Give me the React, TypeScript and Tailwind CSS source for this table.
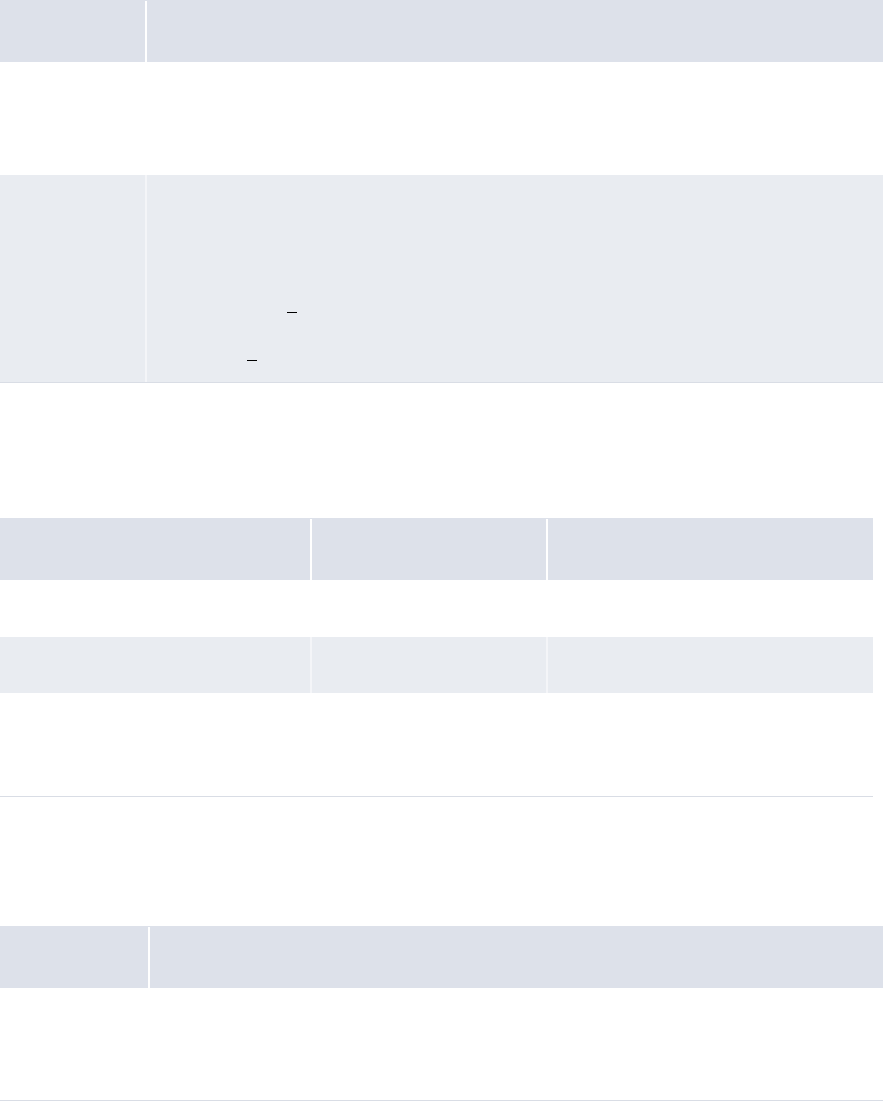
import React from 'react';

const head = 'bg-[#dde1ea]';
const stripe = 'bg-[#e9ecf1]';

const Dash = ({ left, top }: { left: number; top: number }) => (
  <div className="h-px w-[10px] bg-black" style={{ marginLeft: left, marginTop: top }} />
);

export default function App() {
  return (
    <div className="w-[883px] min-h-[1101px] bg-white font-['Liberation_Sans',sans-serif]">
      {/* table 1 */}
      <div className="w-[883px] border-b border-[#d9dde5]">
        <div className="flex h-[62px]">
          <div className={`w-[145px] ${head}`} />
          <div className="w-[2px] flex flex-col"><div className="h-px bg-[#dde1ea]" /><div className="flex-1 bg-white" /></div>
          <div className={`flex-1 ${head}`} />
        </div>
        <div className="h-[113px] bg-white" />
        <div className="flex h-[207px]">
          <div className={`w-[145px] ${stripe}`} />
          <div className="w-[2px] bg-[#f4f5f8]" />
          <div className={`flex-1 ${stripe} flex flex-col`}>
            <Dash left={140} top={137} />
            <Dash left={100} top={47} />
          </div>
        </div>
      </div>

      {/* table 2 */}
      <div className="mt-[135px] w-[873px] border-b border-[#d9dde5]">
        <div className="flex h-[62px]">
          <div className={`w-[310px] ${head}`} />
          <div className="w-[2px] flex flex-col"><div className="h-px bg-[#dde1ea]" /><div className="flex-1 bg-white" /></div>
          <div className={`w-[234px] ${head}`} />
          <div className="w-[2px] flex flex-col"><div className="h-px bg-[#dde1ea]" /><div className="flex-1 bg-white" /></div>
          <div className={`flex-1 ${head}`} />
        </div>
        <div className="h-[57px] bg-white" />
        <div className="flex h-[56px]">
          <div className={`w-[310px] ${stripe}`} />
          <div className="w-[2px] bg-[#f4f5f8]" />
          <div className={`w-[234px] ${stripe}`} />
          <div className="w-[2px] bg-[#f4f5f8]" />
          <div className={`flex-1 ${stripe}`} />
        </div>
        <div className="h-[103px] bg-white" />
      </div>

      {/* table 3 */}
      <div className="mt-[129px] w-[883px] border-b border-[#d9dde5]">
        <div className="flex h-[62px]">
          <div className={`w-[148px] ${head}`} />
          <div className="w-[2px] flex flex-col"><div className="h-px bg-[#dde1ea]" /><div className="flex-1 bg-white" /></div>
          <div className={`flex-1 ${head}`} />
        </div>
        <div className="h-[112px] bg-white" />
      </div>
    </div>
  );
}
